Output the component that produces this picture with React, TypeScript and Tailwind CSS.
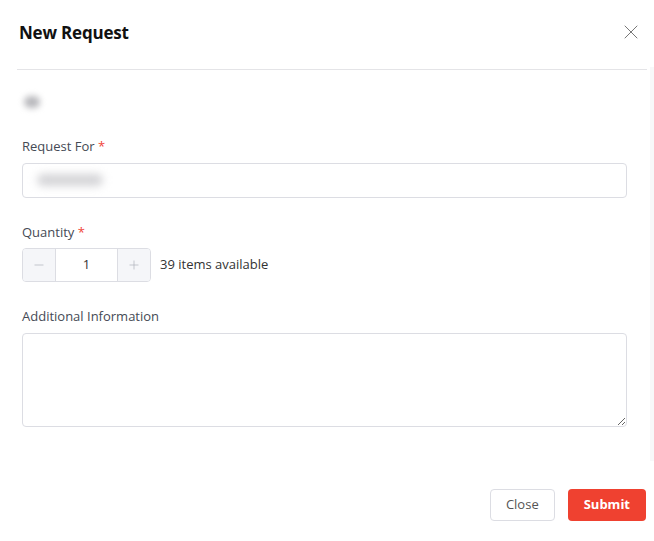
import { X, Minus, Plus } from 'lucide-react'

export default function App(){
  return (
    <div className="w-[654px] h-[541px] bg-white flex flex-col text-[#303133]" style={{fontFamily:'"Open Sans", "Noto Sans", sans-serif'}}>
      <div className="flex items-center justify-between h-[69px] pl-[19px] pr-[17px] shrink-0">
        <div className="text-[17px] font-bold text-[#111] tracking-[-0.2px] mt-[-3px]">New Request</div>
        <button className="text-[#777] mr-[-6px] mt-[-5px]"><X size={24} strokeWidth={1}/></button>
      </div>
      <div className="flex h-[392px] shrink-0">
        <div className="flex-1 flex flex-col">
          <div className="ml-[17px] mr-[3px] border-t border-[#e4e4e7]"></div>
          <div className="pl-[22px] pr-[23px] flex flex-col">
            <div className="mt-[26px] h-[12px] w-[16px] rounded-full bg-[#b8b8bc] blur-[3px] ml-[2px]"></div>
            <label className="mt-[29px] text-[13px] text-[#454a55]">Request For <span className="text-[#f04438]">*</span></label>
            <div className="mt-[6px] h-[35px] rounded-[4px] border border-[#dcdde3] flex items-center px-3">
              <div className="h-[12px] w-[66px] ml-[2px] rounded-full bg-[#d4d4d7] blur-[4px]"></div>
            </div>
            <label className="mt-[25px] text-[13px] text-[#454a55]">Quantity <span className="text-[#f04438]">*</span></label>
            <div className="mt-[6px] flex items-center gap-[9px]">
              <div className="flex h-[34px] w-[129px] rounded-[4px] border border-[#dcdde3] overflow-hidden">
                <div className="w-[33px] bg-[#f5f6f9] border-r border-[#dcdde3] flex items-center justify-center text-[#b0b3ba]"><Minus size={14} strokeWidth={1.2}/></div>
                <div className="flex-1 flex items-center justify-center text-[13px] text-[#333]">1</div>
                <div className="w-[33px] bg-[#f5f6f9] border-l border-[#dcdde3] flex items-center justify-center text-[#b0b3ba]"><Plus size={14} strokeWidth={1.2}/></div>
              </div>
              <span className="text-[13px] text-[#333]">39 items available</span>
            </div>
            <label className="mt-[25px] text-[13px] text-[#454a55]">Additional Information</label>
            <textarea className="mt-[6px] h-[94px] rounded-[4px] border border-[#dcdde3] resize-y outline-none"></textarea>
          </div>
        </div>
        <div className="w-[4px] bg-[#f8f8f9] mt-[-2px]"></div>
      </div>
      <div className="flex justify-end gap-[13px] pr-[8px] pt-[28px]">
        <button className="h-[32px] px-[15px] rounded-[4px] border border-[#dcdde3] text-[13px] text-[#555]">Close</button>
        <button className="h-[32px] px-[16px] rounded-[4px] bg-[#ef4130] text-[13px] font-bold text-white">Submit</button>
      </div>
    </div>
  )
}
